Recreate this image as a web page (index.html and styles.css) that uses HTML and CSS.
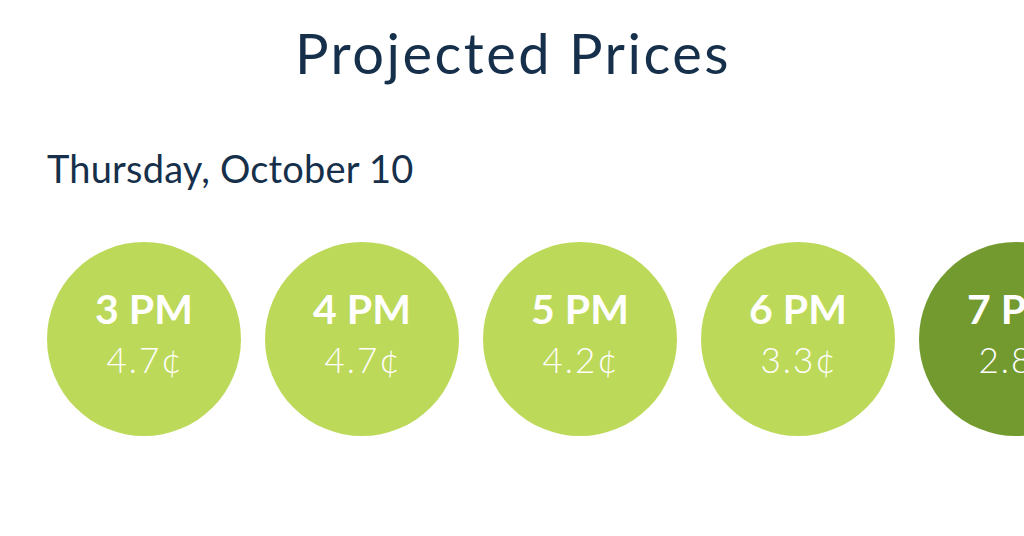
FILE: index.html
```html
<!DOCTYPE html>
<html lang="en">
<head>
    <meta charset="UTF-8">
    <title>Projected Prices</title>
    <link rel="stylesheet" href="styles.css">
</head>
<body>
<div class="page">
    <h1 class="title">Projected Prices</h1>
    <div class="day">Thursday, October 10</div>
    <ul class="hours">
        <li class="hour"><span class="time">3 PM</span><span class="price">4.7¢</span></li>
        <li class="hour"><span class="time">4 PM</span><span class="price">4.7¢</span></li>
        <li class="hour"><span class="time">5 PM</span><span class="price">4.2¢</span></li>
        <li class="hour"><span class="time">6 PM</span><span class="price">3.3¢</span></li>
        <li class="hour low"><span class="time">7 PM</span><span class="price">2.8¢</span></li>
    </ul>
</div>
</body>
</html>
```

FILE: styles.css
```css
*{
    margin:0;padding:0;
    box-sizing:border-box;
}
body{
    background:#fff;
    font-family:Lato,"Noto Sans",sans-serif;
    color:#16304b;
    overflow:hidden;
}
.page{
    width:1024px;
    height:536px;
    overflow:hidden;
    padding:0 0 0 47px;
}
.title{
    font-weight:400;
    font-size:56px;
    text-align:center;
    margin-left:-47px;
    padding-top:20px;
    line-height:66px;
    letter-spacing:2.5px;
    text-indent:2px;
}
.day{
    font-size:38px;
    margin-top:59px;
    line-height:46px;
    letter-spacing:0.2px;
}
.hours{
    list-style:none;
    display:flex;
    gap:24px;
    margin-top:51px;
}
.hour{
    flex:none;
    width:194px;
    height:194px;
    padding-bottom:14px;
    border-radius:50%;
    background:#bdd95a;
    color:#fff;
    display:flex;
    flex-direction:column;
    align-items:center;
    justify-content:center;
}
.hour.low{
    background:#739a2f;
}
.time{
    font-weight:700;
    font-size:41px;
    line-height:50px;
}
.price{
    font-weight:300;
    font-size:35px;
    line-height:44px;
    margin-top:3px;
    letter-spacing:2px;
    text-indent:2px;
}
```
